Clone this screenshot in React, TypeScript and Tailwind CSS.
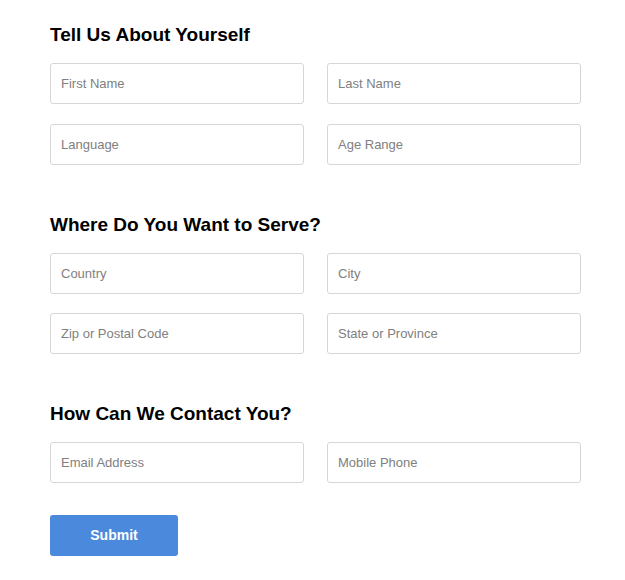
import React from 'react';

const sections = [
  { title: 'Tell Us About Yourself', fields: ['First Name', 'Last Name', 'Language', 'Age Range'] },
  { title: 'Where Do You Want to Serve?', fields: ['Country', 'City', 'Zip or Postal Code', 'State or Province'] },
  { title: 'How Can We Contact You?', fields: ['Email Address', 'Mobile Phone'] },
];

export default function App() {
  return (
    <div className="min-h-[580px] w-[625px] bg-white pl-[50px] pt-[23px] font-['Liberation_Sans',Arial,sans-serif]">
      <form className="w-[531px]" onSubmit={e => e.preventDefault()}>
        {sections.map((s, i) => (
          <div key={s.title} className={i > 0 ? 'mt-[48px]' : ''}>
            <h2 className="text-[19px] font-bold leading-[24px] text-black">{s.title}</h2>
            <div className={`mt-[16px] grid grid-cols-2 gap-x-[23px] ${i === 0 ? 'gap-y-[20px]' : 'gap-y-[19px]'}`}>
              {s.fields.map(f => (
                <input
                  key={f}
                  type="text"
                  placeholder={f}
                  className="h-[41px] w-full rounded-[3px] border border-[#d6d6d6] bg-white px-[10px] text-[13px] text-[#555] outline-none placeholder:text-[#808080]"
                />
              ))}
            </div>
          </div>
        ))}
        <button
          type="submit"
          className="mt-[32px] h-[41px] w-[128px] rounded-[3px] bg-[#4a89dc] text-[14px] font-bold text-white"
        >
          Submit
        </button>
      </form>
    </div>
  );
}
